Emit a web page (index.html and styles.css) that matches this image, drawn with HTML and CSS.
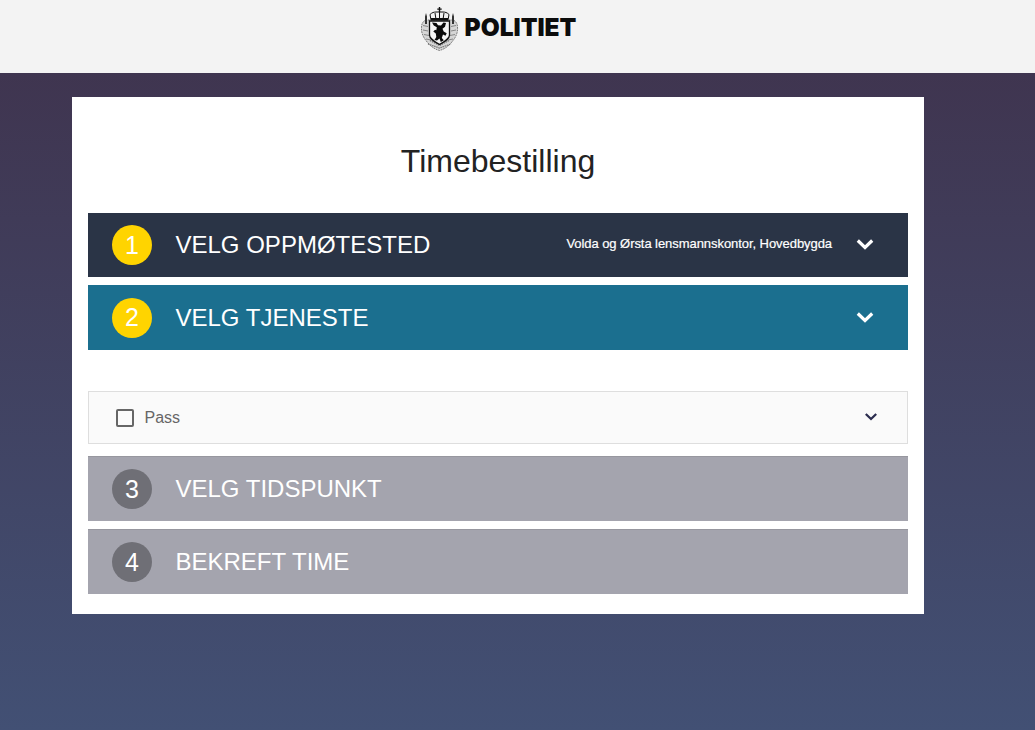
FILE: index.html
```html
<!DOCTYPE html>
<html lang="no">
<head>
<meta charset="utf-8">
<title>Timebestilling</title>
<link rel="stylesheet" href="styles.css">
</head>
<body>
<header class="top">
  <div class="brand">
    <svg class="crest" viewBox="0 0 38 44" width="38" height="44" aria-hidden="true">
      <path d="M5 13C2 14 .5 17 .5 20c-.5 5 1.500 10 4.500 13.500C8.500 38.500 13 42 18.500 43.500 24 42 28.500 38.500 32 33.500c3-3.500 5-8.500 4.500-13.500 0-3-1.500-6-4.500-7z" fill="#d6d6d6" stroke="#6e6e6e" stroke-width=".9" stroke-dasharray="1.800 .8"/>
      <path d="M2 18.500l5 1M2 23l5 1M3 27.500l5 1M5 32l5 1M35 18.500l-5 1M35 23l-5 1M34 27.500l-5 1M32 32l-5 1" stroke="#7e7e7e" stroke-width=".9"/>
      <path d="M7 37l11.500 4L30 37M9 33.500l9.500 5 9.500-5" fill="none" stroke="#6e6e6e" stroke-width="1.200" stroke-dasharray="1.400 .8"/>
      <path d="M4 17V9.500L5 6l1 3.500V17zM31 17V9.500L32 6l1 3.500V17z" fill="#333"/>
      <path d="M17.800 0h1.400v1.500h1.500v1.200h-1.500V5h-1.400V2.700h-1.500V1.500h1.500z" fill="#111"/>
      <path d="M9 7.500c2-2 4-2.500 6-2.500h7c2 0 4 .5 6 2.500L27 13H10z" fill="#f3f3f3" stroke="#111" stroke-width="1"/>
      <path d="M14 6l1 6.500M18.500 5v7.500M23 6l-1 6.500" stroke="#111" stroke-width="1"/>
      <path d="M10 11h17v2H10z" fill="#111"/>
      <path d="M8.500 14h20v14c0 4-5 6.500-10 9.500-5-3-10-5.500-10-9.500z" fill="#f5f5f5" stroke="#111" stroke-width="1.300"/>
      <path d="M11 15.500l4.500.5 1.500 2.200 3 .2 2.500-3 2.500.5-1 3.800-2.500 2 1.200 2.800 3 1.800-1.200 2.500-2.500-1.200-1.200 3.500 2 2.200-3 1.800-1.300-3.500-2.500 1.800-2.500-.5 1.800-3-.5-3.500-2.500-1.800 1.800-1.800 1.200.5.500-3-3-1.800z" fill="#0a0a0a"/>
    </svg>
    <span class="wordmark">POLITIET</span>
  </div>
</header>
<main class="card">
  <h1 class="title">Timebestilling</h1>
  <section class="step step-done">
    <span class="num num-yellow">1</span>
    <span class="label">VELG OPPMØTESTED</span>
    <span class="chosen">Volda og Ørsta lensmannskontor, Hovedbygda</span>
    <svg class="chev" viewBox="0 0 18 12" width="18" height="12" aria-hidden="true"><path d="M1.800 2.500L9 9.500l7.200-7" fill="none" stroke="#fff" stroke-width="3.200"/></svg>
  </section>
  <section class="step step-active">
    <span class="num num-yellow">2</span>
    <span class="label">VELG TJENESTE</span>
    <svg class="chev" viewBox="0 0 18 12" width="18" height="12" aria-hidden="true"><path d="M1.800 2.500L9 9.500l7.200-7" fill="none" stroke="#fff" stroke-width="3.200"/></svg>
  </section>
  <div class="panel">
    <div class="option">
      <span class="box"></span>
      <span class="opt-name">Pass</span>
      <svg class="opt-chev" viewBox="0 0 14 10" width="14" height="10" aria-hidden="true"><path d="M1.800 2l5.200 5 5.200-5" fill="none" stroke="#2b2d4f" stroke-width="2.300"/></svg>
    </div>
  </div>
  <section class="step step-off">
    <span class="num num-grey">3</span>
    <span class="label">VELG TIDSPUNKT</span>
  </section>
  <section class="step step-off">
    <span class="num num-grey">4</span>
    <span class="label">BEKREFT TIME</span>
  </section>
</main>
</body>
</html>
```
FILE: styles.css
```css
html, body {
  margin: 0;
  height: 730px;
  overflow: hidden;
}
body {
  font-family: "Liberation Sans", Arial, sans-serif;
  background: linear-gradient(#3f324c, #425074);
  background-color: #425074;
}
.top {
  height: 73px;
  background: #f3f3f3;
  display: flex;
  justify-content: center;
  align-items: flex-start;
  padding-right: 38px;
}
.brand {
  display: flex;
  align-items: center;
  gap: 6px;
  height: 44px;
  margin-top: 7px;
}
.crest { display: block; }
.wordmark {
  font-family: Inter, "Liberation Sans", sans-serif;
  font-weight: 900;
  font-size: 24.5px;
  line-height: 1;
  color: #0c0c0c;
  margin-top: -4px;
}
.card {
  width: 820px;
  height: 485px;
  margin: 24px 0 0 72px;
  padding: 16px;
  background: #fff;
}
.title {
  margin: 30px 0 33px;
  height: 37px;
  font-size: 32px;
  line-height: 37px;
  font-weight: 400;
  text-align: center;
  color: #222;
}
.step {
  display: flex;
  align-items: center;
  height: 65px;
  margin-bottom: 8px;
  padding: 0 34px 0 24px;
  color: #fff;
}
.step-done { height: 64px; background: #2a3446; }
.step-active { margin-bottom: 0; background: #1b6f8f; }
.step-off { background: #a4a4ae; border-top: 1px solid #97979f; box-sizing: border-box; }
.num {
  width: 40px;
  height: 40px;
  border-radius: 50%;
  display: flex;
  align-items: center;
  justify-content: center;
  font-size: 25px;
  color: #fff;
  flex: none;
}
.num-yellow { background: #ffd400; }
.num-grey { background: #6f6f76; }
.label {
  margin-left: 23.5px;
  font-size: 24px;
  line-height: 30px;
}
.chosen {
  margin-left: auto;
  font-size: 13px;
  font-weight: 400;
  letter-spacing: -.06px;
  -webkit-text-stroke: .2px #fff;
  margin-right: 24px;
  margin-top: -3px;
}
.chev { display: block; flex: none; margin-top: -2px; }
.step-active .chev { margin-left: auto; }
.panel { padding: 41px 0 12px; }
.option {
  height: 53px;
  box-sizing: border-box;
  display: flex;
  align-items: center;
  padding: 0 29.5px 0 26.5px;
  background: #fafafa;
  border: 1px solid #dedede;
}
.box {
  width: 14px;
  height: 14px;
  border: 2px solid #666;
  border-radius: 2px;
  flex: none;
}
.opt-name {
  margin-left: 11px;
  font-size: 16px;
  color: #666;
}
.opt-chev { margin-left: auto; display: block; margin-top: -2px; }
```
